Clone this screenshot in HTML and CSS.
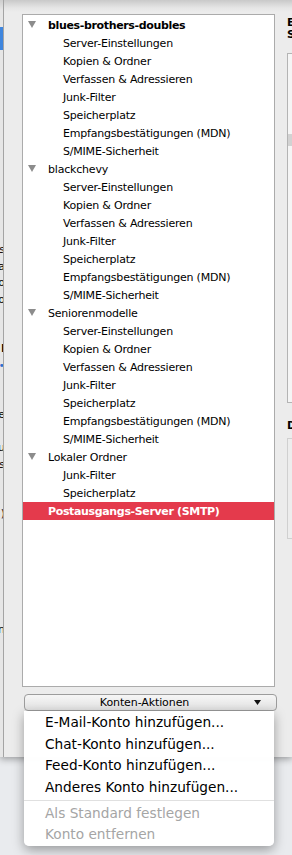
FILE: index.html
```html
<!DOCTYPE html>
<html lang="de">
<head>
    <meta charset="UTF-8">
    <meta name="viewport" content="width=device-width, initial-scale=1.0">
    <title>Konten-Einstellungen</title>
    <link rel="stylesheet" href="styles.css">
</head>
<body>
    <div class="screen">
        <div class="behind">
            <div class="sel"></div>
            <div class="ln">s</div>
            <div class="ln">a</div>
            <div class="ln">o</div>
            <div class="ln">o</div>
            <div class="ln"></div>
            <div class="ln"></div>
            <div class="ln strong">I</div>
            <div class="ln link">•</div>
            <div class="ln"></div>
            <div class="ln"></div>
            <div class="ln">e</div>
            <div class="ln"></div>
            <div class="ln">u</div>
            <div class="ln">s</div>
            <div class="ln"></div>
            <div class="ln"></div>
            <div class="ln">)</div>
            <div class="ln"></div>
            <div class="ln"></div>
            <div class="ln"></div>
            <div class="ln"></div>
            <div class="ln"></div>
            <div class="ln"></div>
            <div class="ln">n</div>
        </div>

        <div class="sheet">
            <div class="accounts">
                <ul class="tree">
                    <li class="group"><svg class="twisty" viewBox="0 0 8 7"><path d="M0 0h8L4 7z"/></svg>blues-brothers-doubles</li>
                    <li>Server-Einstellungen</li>
                    <li>Kopien &amp; Ordner</li>
                    <li>Verfassen &amp; Adressieren</li>
                    <li>Junk-Filter</li>
                    <li>Speicherplatz</li>
                    <li>Empfangsbestätigungen (MDN)</li>
                    <li>S/MIME-Sicherheit</li>
                    <li class="group plain"><svg class="twisty" viewBox="0 0 8 7"><path d="M0 0h8L4 7z"/></svg>blackchevy</li>
                    <li>Server-Einstellungen</li>
                    <li>Kopien &amp; Ordner</li>
                    <li>Verfassen &amp; Adressieren</li>
                    <li>Junk-Filter</li>
                    <li>Speicherplatz</li>
                    <li>Empfangsbestätigungen (MDN)</li>
                    <li>S/MIME-Sicherheit</li>
                    <li class="group plain"><svg class="twisty" viewBox="0 0 8 7"><path d="M0 0h8L4 7z"/></svg>Seniorenmodelle</li>
                    <li>Server-Einstellungen</li>
                    <li>Kopien &amp; Ordner</li>
                    <li>Verfassen &amp; Adressieren</li>
                    <li>Junk-Filter</li>
                    <li>Speicherplatz</li>
                    <li>Empfangsbestätigungen (MDN)</li>
                    <li>S/MIME-Sicherheit</li>
                    <li class="group plain"><svg class="twisty" viewBox="0 0 8 7"><path d="M0 0h8L4 7z"/></svg>Lokaler Ordner</li>
                    <li>Junk-Filter</li>
                    <li>Speicherplatz</li>
                    <li class="selected">Postausgangs-Server (SMTP)</li>
                </ul>
                <div class="actions">
                    <span>Konten-Aktionen</span>
                    <svg class="arrow" viewBox="0 0 7 5"><path d="M0 0h7L3.5 5z"/></svg>
                </div>
            </div>

            <div class="details">
                <p class="title">Einstellungen für Postausgangs-Server (SMTP)</p>
                <p class="title">Standard-Server für alle Konten</p>
                <div class="box">
                    <div class="row"></div>
                    <div class="row"></div>
                    <div class="row"></div>
                    <div class="row"></div>
                    <div class="row"></div>
                    <div class="row"></div>
                    <div class="row"></div>
                    <div class="row active"></div>
                </div>
                <p class="title">Details des ausgewählten Servers:</p>
                <div class="box small"></div>
            </div>
        </div>
    </div>

    <div class="menu">
        <div class="item">E-Mail-Konto hinzufügen...</div>
        <div class="item">Chat-Konto hinzufügen...</div>
        <div class="item">Feed-Konto hinzufügen...</div>
        <div class="item">Anderes Konto hinzufügen...</div>
        <div class="sep"></div>
        <div class="item off">Als Standard festlegen</div>
        <div class="item off">Konto entfernen</div>
    </div>
</body>
</html>
```

FILE: styles.css
```css
body {
    margin: 0;
    width: 292px;
    height: 855px;
    overflow: hidden;
    position: relative;
    background-color: #e9ebee;
    font-family: "DejaVu Sans", "Liberation Sans", sans-serif;
    font-size: 11px;
    color: #000;
}

.screen {
    display: flex;
    height: 757px;
    box-shadow: 0 2px 7px rgba(0, 0, 0, 0.35);
}

/* window behind the sheet, only a sliver is visible */
.behind {
    flex: none;
    width: 3px;
    overflow: hidden;
    display: flex;
    flex-direction: column;
    align-items: flex-end;
    background: linear-gradient(#cdcdcd, #e6e6e6 10px);
}

.sel {
    flex: none;
    width: 3px;
    height: 23px;
    margin-top: 27px;
    margin-bottom: 192px;
    background-color: #3f86de;
}

.ln {
    flex: none;
    height: 16.5px;
    line-height: 16.5px;
    white-space: nowrap;
    margin-right: -2px;
}

.ln.strong {
    font-weight: bold;
}

.ln.link {
    color: #2a6fd0;
}

.sheet {
    flex: none;
    width: 420px;
    display: flex;
    border-left: 1px solid #a4a4a4;
    background: linear-gradient(#c9c9c9, #e6e6e6 8px, #ececec 12px);
}

.accounts {
    width: 255px;
    margin-left: 18px;
    padding-top: 14px;
}

.tree {
    list-style: none;
    margin: 0;
    padding: 1px 0 0;
    width: 251px;
    height: 670px;
    border: 1px solid #ababab;
    background-color: #fff;
}

.tree li {
    display: flex;
    align-items: center;
    height: 18px;
    padding-left: 40px;
    letter-spacing: -0.2px;
    white-space: nowrap;
}

.tree li.group {
    padding-left: 5px;
    font-weight: bold;
    letter-spacing: -0.35px;
}

.tree li.plain {
    font-weight: normal;
    letter-spacing: -0.2px;
}

.twisty {
    width: 8px;
    height: 7px;
    margin-right: 12px;
    margin-top: -1px;
    fill: #8c8c8c;
}

.tree li.selected {
    padding-left: 25px;
    background-color: #e43a4c;
    color: #fff;
    font-weight: bold;
    letter-spacing: -0.35px;
}

.actions {
    display: flex;
    align-items: center;
    width: 241px;
    height: 15px;
    margin: 7px 0 0 2px;
    padding-left: 10px;
    border: 1px solid #9c9c9c;
    border-radius: 4px;
    background: linear-gradient(#f6f6f6, #e2e2e2);
}

.actions span {
    flex: 1;
    text-align: center;
    letter-spacing: -0.1px;
}

.arrow {
    width: 7px;
    height: 5px;
    margin-right: 15px;
    fill: #111;
}

.details {
    margin-left: 10px;
    padding-top: 17px;
}

.title {
    margin: 0;
    height: 12px;
    line-height: 12px;
    font-weight: bold;
    white-space: nowrap;
}

.box {
    width: 200px;
    height: 350px;
    margin: 12px 0 17px;
    padding-top: 10px;
    box-sizing: border-box;
    border: 1px solid #b4b4b4;
    background-color: #f5f5f5;
}

.box .row {
    height: 10px;
}

.box .row.active {
    height: 12px;
    background-color: #d2d2d2;
}

.box.small {
    height: 101px;
    margin: 6px 0 0;
    border-color: #d0d0d0;
    background-color: #ededed;
}

/* popup opened from the Konten-Aktionen button */
.menu {
    position: absolute;
    left: 24px;
    top: 711px;
    width: 250px;
    padding: 1px 0 1px;
    background-color: rgba(255, 255, 255, 0.98);
    border-radius: 0 0 5px 5px;
    box-shadow: 0 4px 12px rgba(0, 0, 0, 0.35);
    font-size: 13.7px;
}

.menu .item {
    height: 21.5px;
    line-height: 21.5px;
    padding-left: 21px;
    white-space: nowrap;
}

.menu .sep {
    height: 1px;
    margin: 2px 0 2px;
    background-color: #e0e0e0;
}

.menu .item.off {
    height: 21px;
    line-height: 21px;
    color: #a5a5a5;
}
```
